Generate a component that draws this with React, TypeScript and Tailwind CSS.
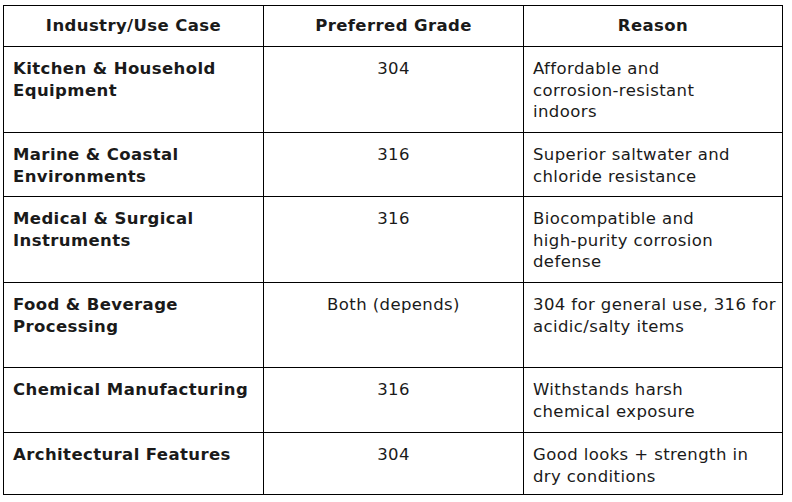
const ROWS: { use: string[]; grade: string; reason: string[]; h: string }[] = [
  { use: ["Kitchen & Household", "Equipment"], grade: "304", reason: ["Affordable and", "corrosion-resistant", "indoors"], h: "h-[86px]" },
  { use: ["Marine & Coastal", "Environments"], grade: "316", reason: ["Superior saltwater and", "chloride resistance"], h: "h-[64px]" },
  { use: ["Medical & Surgical", "Instruments"], grade: "316", reason: ["Biocompatible and", "high-purity corrosion", "defense"], h: "h-[86px]" },
  { use: ["Food & Beverage", "Processing"], grade: "Both (depends)", reason: ["304 for general use, 316 for", "acidic/salty items"], h: "h-[85px]" },
  { use: ["Chemical Manufacturing"], grade: "316", reason: ["Withstands harsh", "chemical exposure"], h: "h-[65px]" },
  { use: ["Architectural Features"], grade: "304", reason: ["Good looks + strength in", "dry conditions"], h: "h-[62px]" },
];

function Lines({ lines }: { lines: string[] }) {
  return (
    <>
      {lines.map((l) => (
        <span key={l} className="block whitespace-nowrap">
          {l}
        </span>
      ))}
    </>
  );
}

export default function App() {
  return (
    <div className="min-h-[502px] w-[792px] bg-white pl-[3px] pt-[5px] font-['DejaVu_Sans',sans-serif] text-[16.5px] leading-[21.5px] tracking-[0.4px] text-[#1a1a1a]">
      <table className="w-[779px] table-fixed border-collapse">
        <colgroup>
          <col className="w-[260px]" />
          <col className="w-[260px]" />
          <col className="w-[259px]" />
        </colgroup>
        <thead>
          <tr className="h-[41px]">
            <th className="border border-black px-[9px] text-center align-middle font-bold">Industry/Use Case</th>
            <th className="border border-black px-[9px] text-center align-middle font-bold">Preferred Grade</th>
            <th className="border border-black px-[9px] text-center align-middle font-bold">Reason</th>
          </tr>
        </thead>
        <tbody>
          {ROWS.map((r) => (
            <tr key={r.use[0]} className={r.h}>
              <td className="border border-black px-[9px] pt-[11px] align-top font-bold">
                <Lines lines={r.use} />
              </td>
              <td className="border border-black px-[9px] pt-[11px] text-center align-top">{r.grade}</td>
              <td className="border border-black px-[9px] pt-[11px] align-top">
                <Lines lines={r.reason} />
              </td>
            </tr>
          ))}
        </tbody>
      </table>
    </div>
  );
}
